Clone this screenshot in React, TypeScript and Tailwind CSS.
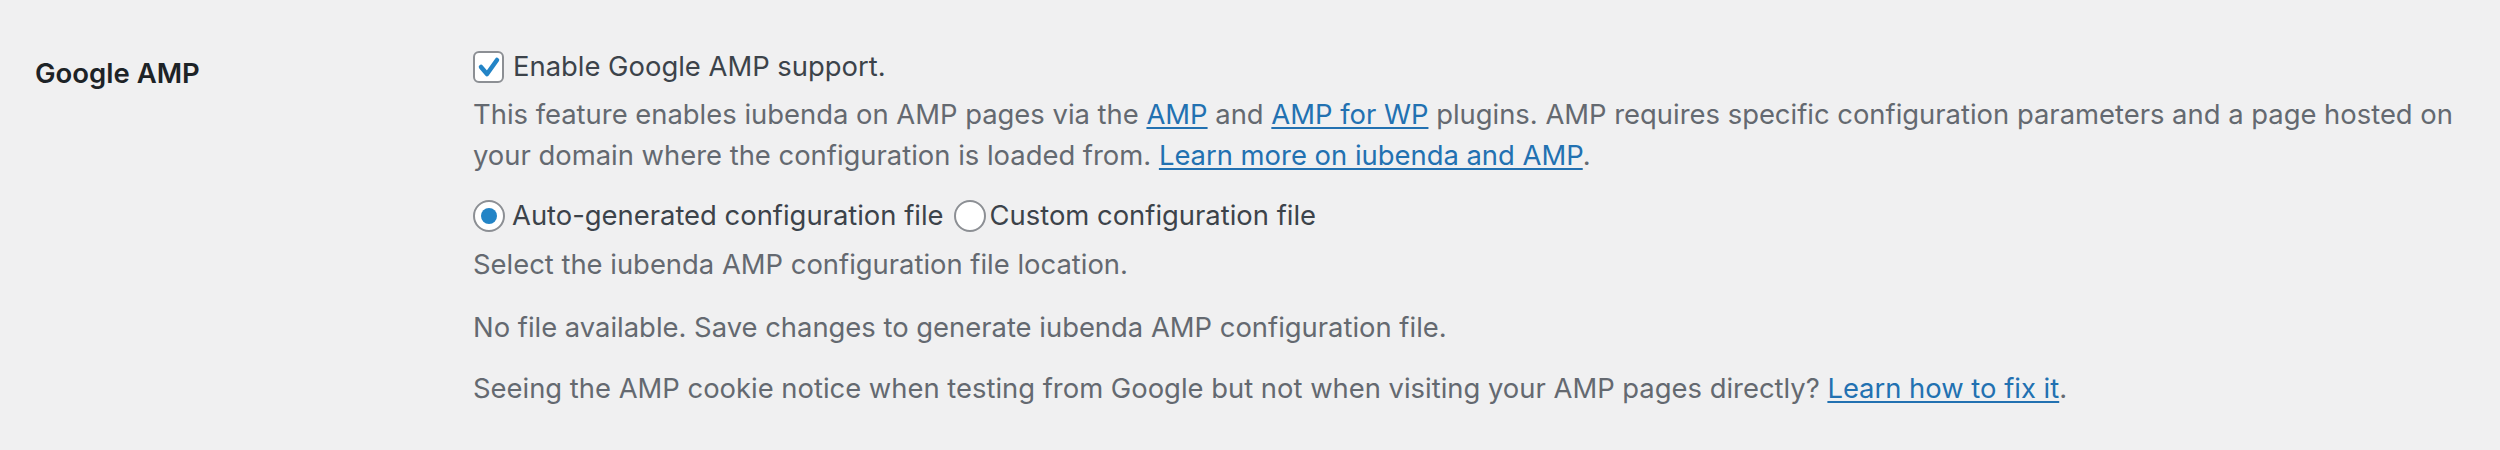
import React from "react";

const Check = () => (
  <span className="inline-flex h-[32px] w-[31px] shrink-0 items-center justify-center rounded-[6px] border-2 border-[#8c8f94] bg-white">
    <svg width="24" height="22" viewBox="0 0 24 22">
      <polyline
        points="4,11 10,18 20,4"
        fill="none"
        stroke="#2384c6"
        strokeWidth="4.5"
        strokeLinecap="round"
        strokeLinejoin="round"
      />
    </svg>
  </span>
);

const Radio = ({ checked }: { checked?: boolean }) => (
  <span className="inline-flex h-[32px] w-[32px] shrink-0 items-center justify-center rounded-full border-2 border-[#8c8f94] bg-white">
    {checked && <span className="h-[16px] w-[16px] rounded-full bg-[#2384c6]" />}
  </span>
);

const A = ({ children }: { children: React.ReactNode }) => (
  <a href="#" className="text-[#2271b1] underline underline-offset-[3px] decoration-[2px]">
    {children}
  </a>
);

export default function App() {
  return (
    <div className="flex h-[450px] w-full bg-[#f0f0f1] font-['Inter',sans-serif]">
      <div className="w-[473px] shrink-0 pl-[35px] pt-[53px]">
        <h3 className="text-[27.5px] font-semibold leading-[40px] text-[#1d2327]">
          Google AMP
        </h3>
      </div>
      <div className="flex-1 pr-[25px] pt-[46px] text-[27.4px] leading-[41px] text-[#646970]">
        <div className="flex items-center gap-[9px] text-[#3c434a]">
          <Check />
          <span>Enable Google AMP support.</span>
        </div>
        <p className="mt-[7px]">
          This feature enables iubenda on AMP pages via the <A>AMP</A> and{" "}
          <A>AMP for WP</A> plugins. AMP requires specific configuration parameters and a
          page hosted on your domain where the configuration is loaded from.{" "}
          <A>Learn more on iubenda and AMP</A>.
        </p>
        <div className="mt-[19px] flex items-center text-[#3c434a]">
          <Radio checked />
          <span className="ml-[7px] mr-[10px]">Auto-generated configuration file</span>
          <Radio />
          <span className="ml-[4px]">Custom configuration file</span>
        </div>
        <p className="mt-[8px]">Select the iubenda AMP configuration file location.</p>
        <p className="mt-[22px]">
          No file available. Save changes to generate iubenda AMP configuration file.
        </p>
        <p className="mt-[20px]">
          Seeing the AMP cookie notice when testing from Google but not when visiting your
          AMP pages directly? <A>Learn how to fix it</A>.
        </p>
      </div>
    </div>
  );
}
